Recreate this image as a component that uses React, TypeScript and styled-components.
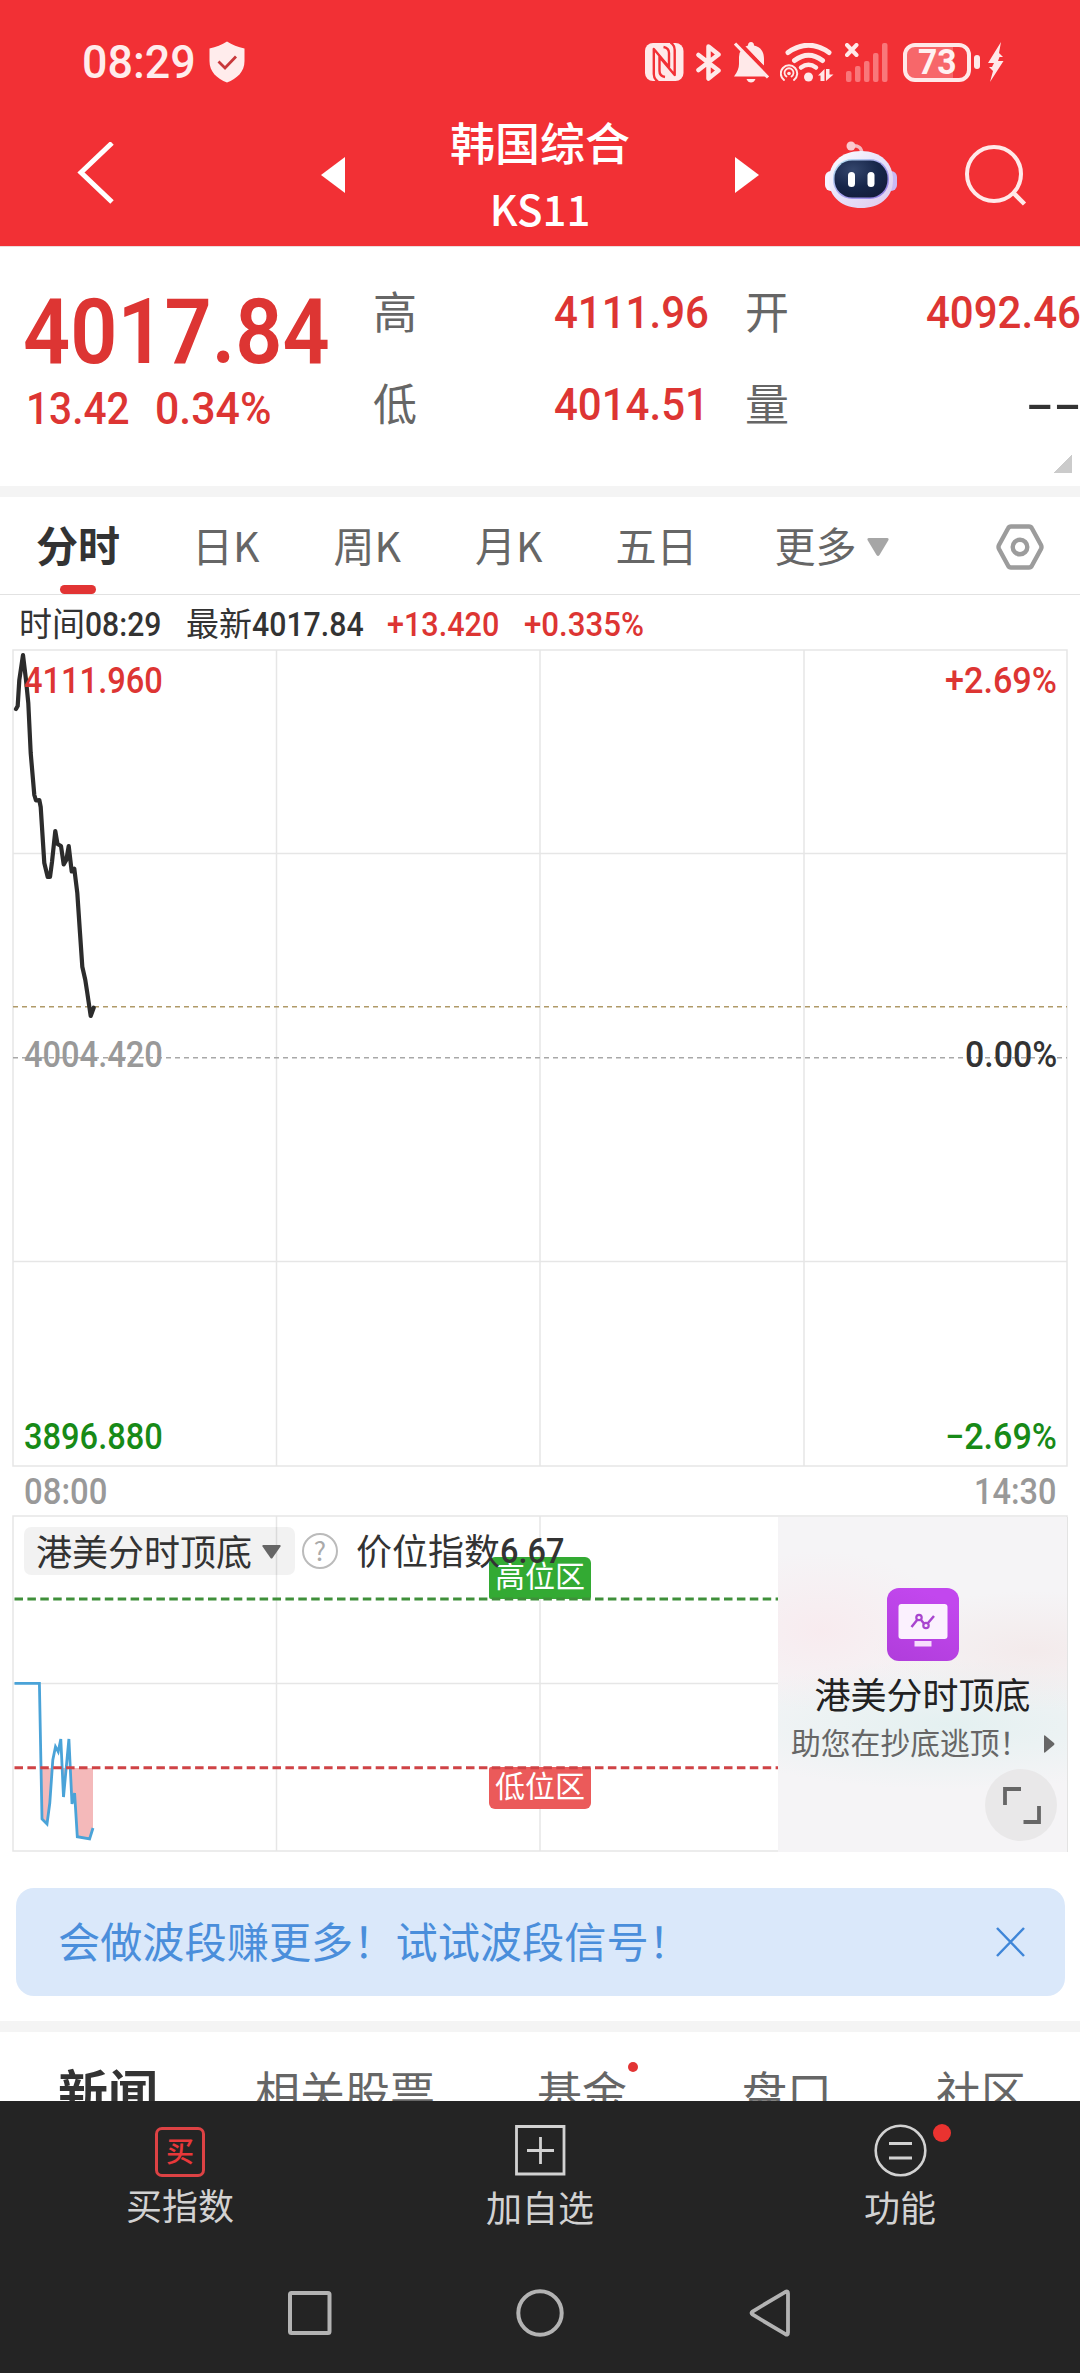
import React from "react";
import styled, { createGlobalStyle, css } from "styled-components";

const RED = "#f23035";
const UP = "#dd3533";
const DOWN = "#178a17";
const CJK = `"Noto Sans CJK SC", "Noto Sans", sans-serif`;

const GlobalStyle = createGlobalStyle`
  * { box-sizing: border-box; }
  body { margin: 0; background: #fff; font-family: ${CJK}; }
  svg { display: block; flex: none; }
`;

/* ---------- numerals ---------- */

const ADVANCE: Record<string, number> = {
  ".": 0.277, ":": 0.264, "%": 0.738, "+": 0.565, "−": 0.573, "-": 0.33,
};

const NumBox = styled.span<{ $w: number; $size: number; $color: string; $weight: number }>`
  display: inline-block;
  flex: none;
  width: ${(p) => p.$w}px;
  height: ${(p) => p.$size}px;
  line-height: ${(p) => p.$size}px;
  font-family: Roboto, "Liberation Sans", sans-serif;
  font-size: ${(p) => p.$size}px;
  font-weight: ${(p) => p.$weight};
  color: ${(p) => p.$color};
`;

const NumInk = styled.span<{ $sx: number }>`
  display: inline-block;
  white-space: nowrap;
  transform-origin: 0 50%;
  transform: scaleX(${(p) => p.$sx});
`;

type NumProps = { text: string; w: number; size: number; color?: string; weight?: number };

/* Condensed figures: the text is narrowed so that it takes up `w` pixels. */
function Num({ text, w, size, color = "#333", weight = 500 }: NumProps) {
  const natural = [...text].reduce((sum, c) => sum + (ADVANCE[c] ?? 0.565), 0) * size;
  return (
    <NumBox $w={w} $size={size} $color={color} $weight={weight}>
      <NumInk $sx={w / natural}>{text}</NumInk>
    </NumBox>
  );
}

const Text = styled.span<{ $size: number; $color?: string; $weight?: number }>`
  flex: none;
  font-family: ${CJK};
  font-size: ${(p) => p.$size}px;
  font-weight: ${(p) => p.$weight ?? 400};
  color: ${(p) => p.$color ?? "#333"};
  line-height: 1;
  padding-bottom: 0.11em;
  white-space: nowrap;
`;

/* ---------- page ---------- */

const Page = styled.div`
  width: 1080px;
  height: 2373px;
  overflow: hidden;
  background: #fff;
  display: flex;
  flex-direction: column;
`;

const Top = styled.header`
  flex: none;
  height: 246px;
  background: ${RED};
`;

const StatusBar = styled.div`
  height: 103px;
  padding: 21px 76px 0 82px;
  display: flex;
  align-items: center;
`;

const StatusIcons = styled.div`
  margin-left: auto;
  display: flex;
  align-items: center;
`;

const Slot = styled.div<{ $ml: number }>`
  flex: none;
  margin-left: ${(p) => p.$ml}px;
`;

const Battery = styled.div`
  margin-left: 14px;
  width: 68px;
  height: 39px;
  border: 4px solid #ffe9e9;
  border-radius: 12px;
  background: linear-gradient(90deg, #f7676a 76%, #f23a3e 76%);
  display: flex;
  align-items: center;
  justify-content: center;
`;

const BatteryNub = styled.div`
  width: 6px;
  height: 14px;
  margin-left: 3px;
  border-radius: 3px;
  background: #ffe9e9;
`;

const NavRow = styled.div`
  height: 143px;
  padding-right: 53px;
  display: flex;
  align-items: center;
`;

const Title = styled.div`
  width: 391px;
  padding-top: 5px;
  display: flex;
  flex-direction: column;
  align-items: center;
`;

const TitleLine = styled.div`
  height: 66px;
  display: flex;
  align-items: center;
`;

/* ---------- quote ---------- */

const Quote = styled.section`
  position: relative;
  flex: none;
  height: 240px;
  display: flex;
  border-top: 1px solid #ecdcdc;
`;

const PriceCol = styled.div`
  width: 373px;
  padding: 44px 0 0 23px;
`;

const PriceLine = styled.div<{ $h: number; $pl?: number }>`
  height: ${(p) => p.$h}px;
  padding-left: ${(p) => p.$pl ?? 0}px;
  display: flex;
  align-items: center;
  gap: 26px;
`;

const Stats = styled.div`
  padding-top: 19px;
  display: grid;
  grid-template-columns: 335px 335px;
  grid-auto-rows: 92px;
  column-gap: 37px;
`;

const Stat = styled.div`
  display: flex;
  align-items: center;
  justify-content: space-between;
`;

const Corner = styled.div`
  position: absolute;
  right: 8px;
  bottom: 13px;
  width: 18px;
  height: 18px;
  background: linear-gradient(135deg, transparent 50%, #cbcbcb 50%);
`;

const Divider = styled.div`
  flex: none;
  height: 11px;
  background: #f4f4f4;
`;

/* ---------- period tabs ---------- */

const Tabs = styled.nav`
  flex: none;
  height: 98px;
  padding: 2px 35px 0 36px;
  border-bottom: 1px solid #e2e2e2;
  display: flex;
  align-items: center;
`;

const Tab = styled.div<{ $active?: boolean; $mr: number }>`
  position: relative;
  height: 95px;
  margin-right: ${(p) => p.$mr}px;
  display: flex;
  align-items: center;
  gap: 10px;
  ${(p) =>
    p.$active &&
    css`
      &::after {
        content: "";
        position: absolute;
        left: 24px;
        bottom: 0;
        width: 36px;
        height: 9px;
        border-radius: 5px;
        background: #e23434;
      }
    `}
`;

const TabsEnd = styled.div`
  margin-left: auto;
`;

const Info = styled.div`
  flex: none;
  height: 54px;
  padding: 4px 0 0 19px;
  display: flex;
  align-items: center;
`;

const InfoItem = styled.div<{ $mr: number }>`
  display: flex;
  align-items: center;
  margin-right: ${(p) => p.$mr}px;
`;

/* ---------- charts ---------- */

const ChartBox = styled.section<{ $h: number }>`
  position: relative;
  flex: none;
  height: ${(p) => p.$h}px;
`;

const ChartLabel = styled.div<{ $y: number; $right?: boolean }>`
  position: absolute;
  top: ${(p) => p.$y - 18}px;
  ${(p) => (p.$right ? "right: 23px;" : "left: 24px;")}
  height: 36px;
  display: flex;
`;

const TimeAxis = styled.div`
  flex: none;
  height: 48px;
  padding: 2px 24px 0 24px;
  display: flex;
  align-items: center;
  justify-content: space-between;
`;

const IndicatorBar = styled.div`
  position: absolute;
  left: 24px;
  top: 12px;
  height: 48px;
  display: flex;
  align-items: center;
`;

const Picker = styled.div`
  width: 271px;
  height: 48px;
  padding: 1px 0 0 12px;
  margin-right: 7px;
  border-radius: 7px;
  background: rgba(0, 0, 0, 0.05);
  display: flex;
  align-items: center;
  gap: 10px;
`;

const Help = styled.div`
  width: 36px;
  height: 36px;
  margin-right: 18px;
  border: 2px solid #bbb;
  border-radius: 50%;
  display: flex;
  align-items: center;
  justify-content: center;
`;

const ZoneTag = styled.div<{ $top: number; $low?: boolean }>`
  position: absolute;
  left: 489px;
  top: ${(p) => p.$top}px;
  width: 102px;
  height: 42px;
  padding-bottom: 4px;
  border-radius: ${(p) => (p.$low ? "2px 2px 6px 6px" : "6px 6px 2px 2px")};
  background: ${(p) => (p.$low ? "#eb5a5a" : "#33aa33")};
  display: flex;
  align-items: center;
  justify-content: center;
`;

const Promo = styled.div`
  position: absolute;
  left: 778px;
  top: 2px;
  width: 290px;
  height: 335px;
  padding-top: 71px;
  border-right: 1px solid #e3e3e3;
  background:
    radial-gradient(ellipse 130px 80px at 15% 34%, rgba(250, 228, 233, 0.55), transparent),
    radial-gradient(ellipse 160px 60px at 88% 40%, rgba(242, 228, 228, 0.6), transparent),
    radial-gradient(ellipse 260px 65px at 60% 62%, rgba(226, 240, 240, 0.9), transparent),
    #f5f4f6;
  display: flex;
  flex-direction: column;
  align-items: center;
`;

const PromoTitle = styled.div`
  height: 68px;
  display: flex;
  align-items: center;
`;

const PromoNote = styled.div`
  align-self: stretch;
  height: 30px;
  padding: 0 12px 0 13px;
  display: flex;
  align-items: center;
  justify-content: space-between;
`;

const Expand = styled.div`
  position: absolute;
  right: 10px;
  bottom: 11px;
  width: 72px;
  height: 72px;
  border-radius: 50%;
  background: #e9e8e9;
  display: flex;
  align-items: center;
  justify-content: center;
`;

/* ---------- banner, news tabs ---------- */

const Banner = styled.div`
  flex: none;
  height: 108px;
  margin: 36px 15px 25px 16px;
  padding: 0 40px 0 42px;
  border-radius: 18px;
  background: #dae8fa;
  display: flex;
  align-items: center;
  justify-content: space-between;
`;

const NewsTabs = styled.nav`
  flex: none;
  height: 69px;
  padding-left: 58px;
  overflow: hidden;
  display: flex;
  align-items: flex-start;
`;

const NewsTab = styled.div<{ $mr: number; $dot?: boolean }>`
  position: relative;
  height: 122px;
  margin-right: ${(p) => p.$mr}px;
  display: flex;
  align-items: center;
  ${(p) =>
    p.$dot &&
    css`
      &::after {
        content: "";
        position: absolute;
        right: -11px;
        top: 30px;
        width: 10px;
        height: 10px;
        border-radius: 50%;
        background: #e23434;
      }
    `}
`;

/* ---------- bottom ---------- */

const Bottom = styled.footer`
  flex: none;
  height: 272px;
  background: #242424;
`;

const Actions = styled.div`
  height: 152px;
  padding-top: 21px;
  display: grid;
  grid-template-columns: repeat(3, 360px);
`;

const Action = styled.div<{ $gap: number }>`
  display: flex;
  flex-direction: column;
  align-items: center;
  gap: ${(p) => p.$gap}px;
`;

const IconBox = styled.div`
  position: relative;
  width: 56px;
  height: 56px;
  display: flex;
  align-items: center;
  justify-content: center;
`;

const BuyBadge = styled.div`
  width: 50px;
  height: 50px;
  margin-top: 3px;
  border: 3px solid #dd4244;
  border-radius: 7px;
  display: flex;
  align-items: center;
  justify-content: center;
`;

const Dot = styled.div`
  position: absolute;
  left: 61px;
  top: 2px;
  width: 18px;
  height: 18px;
  border-radius: 50%;
  background: #ea3330;
`;

const SystemNav = styled.div`
  height: 120px;
  display: grid;
  grid-template-columns: repeat(3, 230px);
  justify-content: center;
  justify-items: center;
  align-items: center;
`;

/* ---------- icons ---------- */

const W = "#ffe9e9";

const Shield = () => (
  <svg width="36" height="42" viewBox="0 0 36 42">
    <path d="M18 .5 C23 4 29 6 35.5 7.500 V20 C35.500 31 28 37.500 18 41.500 C8 37.500 .5 31 .5 20 V7.500 C7 6 13 4 18 .5Z" fill="#ffecec" />
    <path d="M9.500 20.500 16 27 27 15.500" fill="none" stroke="#c8383b" strokeWidth="2.800" />
  </svg>
);

const Nfc = () => (
  <svg width="39" height="38" viewBox="0 0 39 38">
    <rect width="38.500" height="38" rx="8" fill={W} />
    <g fill="none" stroke={RED} strokeWidth="2.400" strokeLinejoin="round">
      <path d="M13 38.500 Q8.800 36 8.800 31 V6 L24 24 V10 Q24 5 18.500 4" />
      <path d="M25.500 -.5 Q29.700 2 29.700 7 V32 L14.500 14 V28 Q14.500 33 20 34" />
    </g>
  </svg>
);

const Bluetooth = () => (
  <svg width="26" height="37" viewBox="0 0 26 37">
    <path d="M2.500 11 22.500 26.500 12.500 34.500 V2.500 L22.500 10.500 2.500 26" fill="none" stroke={W} strokeWidth="4.500" strokeLinejoin="round" strokeLinecap="round" />
  </svg>
);

const BellOff = () => (
  <svg width="36" height="41" viewBox="0 0 36 41">
    <path d="M17 0 q3 0 3 3.500 C27 5 30 10 30 17 V24 Q31 29 33 34.500 H0 Q5 28 5 22 V15 Q5.500 5.500 14 3.500 14 0 17 0Z" fill={W} />
    <path d="M12.500 37 h9 q-1.500 3.500-4.500 3.500 t-4.500-3.500Z" fill={W} />
    <path d="M0 -5 38 34" stroke={RED} strokeWidth="3" />
    <path d="M4 0 36 34" stroke={RED} strokeWidth="4.500" />
    <path d="M1 1.500 34 35.500" stroke={W} strokeWidth="3.200" />
  </svg>
);

const Wifi = () => (
  <svg width="54" height="39" viewBox="0 0 54 39">
    <g fill="none" stroke={W} strokeLinecap="round">
      <path d="M8 9.500 Q28.500 -5 49 9.500" strokeWidth="5" />
      <path d="M14.500 17.500 Q28.500 7 42.500 17.500" strokeWidth="5" />
      <path d="M21 24.500 Q28.500 19 36 24.500" strokeWidth="4.500" />
      <path d="M4 37 A8.200 8.200 0 1 1 14 37" strokeWidth="2" />
      <path d="M6.500 33.500 A4.500 4.500 0 1 1 11.500 33.500" strokeWidth="1.800" />
    </g>
    <circle cx="28.500" cy="34" r="4.500" fill={W} />
    <circle cx="9" cy="30.500" r="1.800" fill={W} />
    <path d="M38 32.500 44.500 26 V38 H40.500 V32.500Z M46 26 V38 L53.500 31.500 H49.500 V26Z" fill={W} />
  </svg>
);

const Signal = () => (
  <svg width="44" height="39" viewBox="0 0 44 39">
    <g fill="#f9777a">
      <rect x="1" y="28" width="5.500" height="11" rx="2" />
      <rect x="10" y="23" width="5.500" height="16" rx="2" />
      <rect x="19" y="18" width="5.500" height="21" rx="2" />
      <rect x="28" y="10" width="5.500" height="29" rx="2" />
      <rect x="37" y="0" width="5.500" height="39" rx="2" />
    </g>
    <path d="M2 2 11.500 12 M11.500 2 2 12" stroke={W} strokeWidth="4" strokeLinecap="round" />
  </svg>
);

const Bolt = () => (
  <svg width="16" height="40" viewBox="0 0 16 40">
    <path d="M13 0 0 21 H6 L4 25 H1 L5 29 2 40 15.500 19 H10 L11.500 15 H15 L11 11Z" fill={W} />
  </svg>
);

const Robot = () => (
  <svg width="74" height="68" viewBox="0 0 74 68">
    <defs>
      <linearGradient id="head" x1="0" y1="0" x2="1" y2="1">
        <stop offset="0" stopColor="#ffffff" />
        <stop offset=".5" stopColor="#e6e2fa" />
        <stop offset="1" stopColor="#e0c8ec" />
      </linearGradient>
      <linearGradient id="rim" x1="0" y1="0" x2="1" y2="1">
        <stop offset="0" stopColor="#b8ecf2" />
        <stop offset=".5" stopColor="#a9a4ee" />
        <stop offset="1" stopColor="#8f78e0" />
      </linearGradient>
      <radialGradient id="visor" cx=".35" cy=".25" r=".8">
        <stop offset="0" stopColor="#34466c" />
        <stop offset=".6" stopColor="#17264a" />
        <stop offset="1" stopColor="#141d3c" />
      </radialGradient>
    </defs>
    <path d="M27 5 Q38 3 38 14" fill="none" stroke="#f6b9c0" strokeWidth="3.500" />
    <circle cx="27" cy="5" r="4.500" fill="#fbc9cf" />
    <rect x="1" y="30" width="14" height="20" rx="6" fill="#f7f3ff" />
    <rect x="59" y="30" width="14" height="20" rx="6" fill="#c9b8f4" />
    <path d="M37 10 C57 10 69 22 69 39 C69 57 55 67 37 67 C19 67 5 57 5 39 C5 22 17 10 37 10Z" fill="url(#head)" />
    <rect x="9" y="18" width="56" height="40" rx="19" fill="url(#rim)" />
    <rect x="10.500" y="19.500" width="53" height="37" rx="17.500" fill="url(#visor)" />
    <rect x="24" y="31" width="7" height="15" rx="3.500" fill="#fff" />
    <rect x="43.500" y="31" width="7" height="15" rx="3.500" fill="#fff" />
  </svg>
);

const Hexagon = () => (
  <svg width="50" height="48" viewBox="0 0 50 48">
    <path d="M16 3.500 H34 Q36 3.500 37 5.500 L46 22 Q47 24 46 26 L37 42.500 Q36 44.500 34 44.500 H16 Q14 44.500 13 42.500 L4 26 Q3 24 4 22 L13 5.500 Q14 3.500 16 3.500Z" fill="none" stroke="#9c9c9c" strokeWidth="4.400" />
    <circle cx="25" cy="24" r="7.300" fill="none" stroke="#9c9c9c" strokeWidth="4.400" />
  </svg>
);

/* ---------- chart drawings ---------- */

const PRICE =
  "16,709 17.700,706 19.300,680 23,655 26,680 28.300,703 30.700,753 34.300,795 36,800.500 39.300,800 40.700,807 44.300,863 47.700,877 50,877 52,862 55.300,831 57.500,844 61,846 63.700,864.500 66.300,860 68.700,846 71.700,871.500 74.300,868.700 77.300,893 80,933 82.300,966.700 85.300,980 87.300,993 90.700,1016 93.700,1007.700";

const INDEX =
  "14.500,1683.300 39.400,1683.300 42,1819 47,1824 49.800,1803 52.800,1760 55.500,1746.700 58.200,1751.700 60.800,1739 63.500,1797 68.900,1739 72,1804 74.600,1793 77.300,1836.700 89.600,1839 93,1828";

const PriceChart = () => (
  <svg width="1080" height="818" viewBox="0 649 1080 818">
    <path
      d="M13 650 H1067 V1466 H13Z M276.500 650 V1466 M540 650 V1466 M804 650 V1466 M13 853.500 H1067 M13 1261.500 H1067"
      stroke="#e6e6e6"
      strokeWidth="1.500"
      fill="none"
    />
    <path d="M13 1006.700 H1067" stroke="#b09a68" strokeWidth="1.500" strokeDasharray="5 4" />
    <path d="M13 1057.700 H1067" stroke="#a8a8a8" strokeWidth="1.500" strokeDasharray="5 4" />
    <polyline points={PRICE} fill="none" stroke="#2c2c2c" strokeWidth="4.200" strokeLinejoin="round" strokeLinecap="round" />
  </svg>
);

const IndexChart = () => (
  <svg width="1080" height="337" viewBox="0 1515 1080 337">
    <defs>
      <clipPath id="low"><rect x="0" y="1768" width="200" height="84" /></clipPath>
    </defs>
    <path d="M13 1516 H1067 V1851 H13Z M276.500 1516 V1851 M540 1516 V1851 M13 1683.500 H1067" stroke="#e6e6e6" strokeWidth="1.500" fill="none" />
    <polygon points={`14.500,1600 ${INDEX} 93,1600`} fill="#f4b9ba" clipPath="url(#low)" />
    <polyline points={INDEX} fill="none" stroke="#4aa3d8" strokeWidth="2.800" />
  </svg>
);

const Thresholds = () => (
  <svg width="765" height="337" viewBox="14 1515 765 337">
    <path d="M14.500 1599 H779" stroke="#3f8f3a" strokeWidth="3" strokeDasharray="8.500 4.400" />
    <path d="M14.500 1767.700 H779" stroke="#cf4346" strokeWidth="3" strokeDasharray="8.500 4.400" />
  </svg>
);

const ThresholdLayer = styled.div`
  position: absolute;
  left: 14px;
  top: 0;
`;

export default function App() {
  return (
    <Page>
      <GlobalStyle />
      <Top>
        <StatusBar>
          <Num text="08:29" w={113} size={46} color="#ffecec" />
          <Slot $ml={14}><Shield /></Slot>
          <StatusIcons>
            <Nfc />
            <Slot $ml={12}><Bluetooth /></Slot>
            <Slot $ml={12}><BellOff /></Slot>
            <Slot $ml={10}><Wifi /></Slot>
            <Slot $ml={11}><Signal /></Slot>
            <Battery><Num text="73" w={38} size={35} color="#fff1f1" weight={700} /></Battery>
            <BatteryNub />
            <Slot $ml={8}><Bolt /></Slot>
          </StatusIcons>
        </StatusBar>
        <NavRow>
          <Slot $ml={76}>
            <svg width="38" height="66" viewBox="0 0 38 66">
              <path d="M36 1 5 30.500 36 60" fill="none" stroke="#fff" strokeWidth="5" />
            </svg>
          </Slot>
          <Slot $ml={207}>
            <svg width="24" height="36" viewBox="0 0 24 36"><path d="M24 0 V36 L0 18Z" fill="#fff" /></svg>
          </Slot>
          <Title>
            <TitleLine><Text $size={45} $color="#fff" $weight={500}>韩国综合</Text></TitleLine>
            <TitleLine><Text $size={42} $color="#fff" $weight={500}>KS11</Text></TitleLine>
          </Title>
          <svg width="24" height="36" viewBox="0 0 24 36"><path d="M0 0 V36 L24 18Z" fill="#fff" /></svg>
          <Slot $ml={65}><Robot /></Slot>
          <Slot $ml={67}>
            <svg width="62" height="62" viewBox="0 0 62 62">
              <circle cx="29" cy="30" r="27" fill="none" stroke="#ffe9e9" strokeWidth="4" />
              <path d="M48.500 49 59.500 60" stroke="#ffe9e9" strokeWidth="4.500" />
            </svg>
          </Slot>
        </NavRow>
      </Top>

      <Quote>
        <PriceCol>
          <PriceLine $h={82}><Num text="4017.84" w={303} size={91} color={UP} weight={600} /></PriceLine>
          <PriceLine $h={70} $pl={3}>
            <Num text="13.42" w={103} size={45} color={UP} />
            <Num text="0.34%" w={116} size={45} color={UP} />
          </PriceLine>
        </PriceCol>
        <Stats>
          <Stat><Text $size={44} $color="#666">高</Text><Num text="4111.96" w={154} size={45} color={UP} /></Stat>
          <Stat><Text $size={44} $color="#666">开</Text><Num text="4092.46" w={154} size={45} color={UP} /></Stat>
          <Stat><Text $size={44} $color="#666">低</Text><Num text="4014.51" w={154} size={45} color={UP} /></Stat>
          <Stat><Text $size={44} $color="#666">量</Text><Num text="--" w={54} size={45} /></Stat>
        </Stats>
        <Corner />
      </Quote>
      <Divider />

      <Tabs>
        <Tab $active $mr={72}><Text $size={42} $weight={700}>分时</Text></Tab>
        <Tab $mr={74}><Text $size={41} $color="#666">日K</Text></Tab>
        <Tab $mr={74}><Text $size={41} $color="#666">周K</Text></Tab>
        <Tab $mr={73}><Text $size={41} $color="#666">月K</Text></Tab>
        <Tab $mr={77}><Text $size={41} $color="#666">五日</Text></Tab>
        <Tab $mr={0}>
          <Text $size={41} $color="#666">更多</Text>
          <svg width="22" height="18" viewBox="0 0 22 18"><path d="M2 0 H20 Q22 0 21.500 2 L12.500 17 Q11 19 9.500 17 L.5 2 Q0 0 2 0Z" fill="#a6a6a6" /></svg>
        </Tab>
        <TabsEnd><Hexagon /></TabsEnd>
      </Tabs>

      <Info>
        <InfoItem $mr={25}><Text $size={33}>时间</Text><Num text="08:29" w={76} size={33} /></InfoItem>
        <InfoItem $mr={24}><Text $size={33}>最新</Text><Num text="4017.84" w={111} size={33} /></InfoItem>
        <InfoItem $mr={25}><Num text="+13.420" w={112} size={33} color={UP} /></InfoItem>
        <InfoItem $mr={0}><Num text="+0.335%" w={120} size={33} color={UP} /></InfoItem>
      </Info>

      <ChartBox $h={818}>
        <PriceChart />
        <ChartLabel $y={32}><Num text="4111.960" w={138} size={36} color={UP} /></ChartLabel>
        <ChartLabel $y={406}><Num text="4004.420" w={138} size={36} color="#999" /></ChartLabel>
        <ChartLabel $y={788}><Num text="3896.880" w={138} size={36} color={DOWN} /></ChartLabel>
        <ChartLabel $y={32} $right><Num text="+2.69%" w={112} size={36} color={UP} /></ChartLabel>
        <ChartLabel $y={406} $right><Num text="0.00%" w={92} size={36} /></ChartLabel>
        <ChartLabel $y={788} $right><Num text="−2.69%" w={112} size={36} color={DOWN} /></ChartLabel>
      </ChartBox>

      <TimeAxis>
        <Num text="08:00" w={83} size={36} color="#999" />
        <Num text="14:30" w={82} size={36} color="#999" />
      </TimeAxis>

      <ChartBox $h={337}>
        <IndexChart />
        <ZoneTag $top={42}><Text $size={30} $color="#fff">高位区</Text></ZoneTag>
        <ZoneTag $top={252} $low><Text $size={30} $color="#fff">低位区</Text></ZoneTag>
        <ThresholdLayer><Thresholds /></ThresholdLayer>
        <IndicatorBar>
          <Picker>
            <Text $size={36}>港美分时顶底</Text>
            <svg width="19" height="14" viewBox="0 0 19 14"><path d="M1 0 H18 Q19 0 18.500 1.500 L10.500 13 Q9.500 14 8.500 13 L.5 1.500 Q0 0 1 0Z" fill="#666" /></svg>
          </Picker>
          <Help><Text $size={26} $color="#aaa">?</Text></Help>
          <Text $size={36}>价位指数</Text>
          <Num text="6.67" w={64} size={35} />
        </IndicatorBar>
        <Promo>
          <svg width="72" height="73" viewBox="0 0 72 73">
            <defs>
              <linearGradient id="promo" x1="0" y1="1" x2=".4" y2="0">
                <stop offset="0" stopColor="#b03ddb" />
                <stop offset="1" stopColor="#c247ee" />
              </linearGradient>
            </defs>
            <rect width="72" height="73" rx="12" fill="url(#promo)" />
            <rect x="11.500" y="16" width="49" height="35" rx="3" fill="#fbf1fe" />
            <rect x="27.500" y="53" width="17" height="5.500" fill="#f7dcfd" />
            <path d="M24.500 39 30.500 31.500 M34 32 37 35.500 M41 35 47 28" stroke="#a845cf" strokeWidth="2.500" fill="none" />
            <circle cx="32" cy="29.500" r="2.700" stroke="#a845cf" strokeWidth="2.200" fill="none" />
            <circle cx="39" cy="37.500" r="2.700" stroke="#a845cf" strokeWidth="2.200" fill="none" />
          </svg>
          <PromoTitle><Text $size={36} $color="#222">港美分时顶底</Text></PromoTitle>
          <PromoNote>
            <Text $size={29.8} $color="#666">助您在抄底逃顶！</Text>
            <svg width="11" height="18" viewBox="0 0 11 18"><path d="M0 1 Q0 0 1 .5 L10 8 Q11 9 10 10 L1 17.500 Q0 18 0 17Z" fill="#666" /></svg>
          </PromoNote>
          <Expand>
            <svg width="40" height="40" viewBox="0 0 40 40">
              <path d="M4 20 V4 H20 M22.500 37 H38 V21" fill="none" stroke="#666" strokeWidth="3.800" />
            </svg>
          </Expand>
        </Promo>
      </ChartBox>

      <Banner>
        <Text $size={42.2} $color="#4a8edb">会做波段赚更多！试试波段信号！</Text>
        <svg width="29" height="30" viewBox="0 0 29 30"><path d="M1 1 28 29 M28 1 1 29" stroke="#3f86d8" strokeWidth="2.500" /></svg>
      </Banner>
      <Divider />

      <NewsTabs>
        <NewsTab $mr={97}><Text $size={50} $weight={700}>新闻</Text></NewsTab>
        <NewsTab $mr={102}><Text $size={45} $color="#666">相关股票</Text></NewsTab>
        <NewsTab $mr={115} $dot><Text $size={45} $color="#666">基金</Text></NewsTab>
        <NewsTab $mr={104}><Text $size={45} $color="#666">盘口</Text></NewsTab>
        <NewsTab $mr={0}><Text $size={45} $color="#666">社区</Text></NewsTab>
      </NewsTabs>

      <Bottom>
        <Actions>
          <Action $gap={8}>
            <IconBox><BuyBadge><Text $size={28} $color="#e8383a" $weight={500}>买</Text></BuyBadge></IconBox>
            <Text $size={36} $color="#d2d2d2">买指数</Text>
          </Action>
          <Action $gap={10}>
            <IconBox>
              <svg width="51" height="51" viewBox="0 0 51 51">
                <path d="M1.500 1.500 H49 V49 H1.500Z M25.500 12 V39 M12 25.500 H39" fill="none" stroke="#d2d2d2" strokeWidth="2.800" />
              </svg>
            </IconBox>
            <Text $size={36} $color="#d2d2d2">加自选</Text>
          </Action>
          <Action $gap={10}>
            <IconBox>
              <svg width="53" height="53" viewBox="0 0 53 53">
                <circle cx="26.500" cy="26.500" r="24.800" fill="none" stroke="#d2d2d2" strokeWidth="2.600" />
                <path d="M15 19.500 H38 M15 34 H38" stroke="#d2d2d2" strokeWidth="2.800" />
              </svg>
              <Dot />
            </IconBox>
            <Text $size={36} $color="#d2d2d2">功能</Text>
          </Action>
        </Actions>
        <SystemNav>
          <svg width="44" height="44" viewBox="0 0 44 44"><rect x="2" y="2" width="39.500" height="40" rx="1.500" fill="none" stroke="#b3b3b3" strokeWidth="4" /></svg>
          <svg width="48" height="48" viewBox="0 0 48 48"><circle cx="24" cy="24" r="21.700" fill="none" stroke="#b3b3b3" strokeWidth="4" /></svg>
          <svg width="42" height="48" viewBox="0 0 42 48"><path d="M36.500 2.800 Q39 1.500 39 4.500 V43.500 Q39 46.500 36.500 45.200 L3.500 25.500 Q1.500 24 3.500 22.500Z" fill="none" stroke="#b3b3b3" strokeWidth="3.800" /></svg>
        </SystemNav>
      </Bottom>
    </Page>
  );
}
